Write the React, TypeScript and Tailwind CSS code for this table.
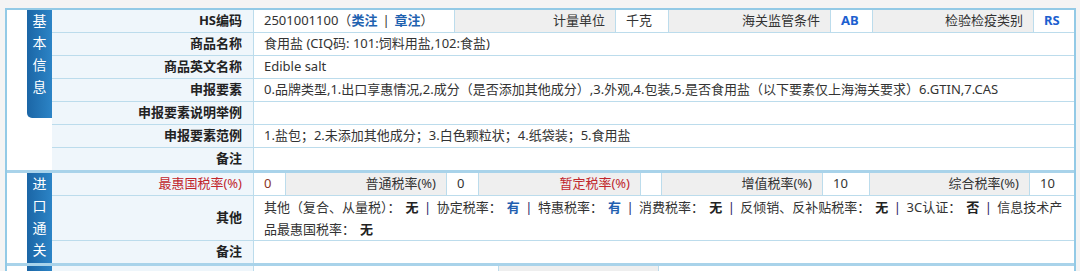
import React from "react";

const line = "border-[#bcdcec]";

function Label({ children, red }: { children?: React.ReactNode; red?: boolean }) {
  return (
    <div
      className={`flex w-[202px] shrink-0 items-center justify-end border-r ${line} bg-[#eff6fb] pr-[11px] ${
        red ? "text-[#c1272d]" : "font-bold text-[#222]"
      }`}
    >
      {children}
    </div>
  );
}

function Gray({ w, children, red }: { w: string; children?: React.ReactNode; red?: boolean }) {
  return (
    <div
      className={`flex ${w} shrink-0 items-center justify-end border-r ${line} bg-[#efefef] pr-[10px] ${
        red ? "text-[#c1272d]" : "text-[#333]"
      }`}
    >
      {children}
    </div>
  );
}

function Cell({ w, children, last }: { w?: string; children?: React.ReactNode; last?: boolean }) {
  return (
    <div
      className={`flex items-center px-[10px] ${w ? `${w} shrink-0` : "min-w-0 flex-1"} ${
        last ? "" : `border-r ${line}`
      }`}
    >
      {children}
    </div>
  );
}

function Row({ children, last, tall }: { children: React.ReactNode; last?: boolean; tall?: boolean }) {
  const h = tall ? (last ? "h-[44px]" : "h-[45px]") : last ? "h-[22px]" : "h-[23px]";
  return <div className={`flex ${h} ${last ? "" : `border-b ${line}`}`}>{children}</div>;
}

function Tab({ text, short }: { text: string; short?: boolean }) {
  return (
    <div
      className={`flex w-[25px] shrink-0 flex-col items-center bg-linear-to-r from-[#1b66a6] to-[#2c84c6] text-[14px] leading-[22px] text-white ${
        short ? "h-[108px] self-start rounded-bl-[5px]" : "self-stretch"
      }`}
    >
      {text.split("").map((c, i) => (
        <span key={i}>{c}</span>
      ))}
    </div>
  );
}

function Section({ tab, short, first, children }: { tab: string; short?: boolean; first?: boolean; children: React.ReactNode }) {
  return (
    <div className={`flex ${first ? "" : "border-t-[3px] border-[#a9d3ea]"}`}>
      <div className="w-[20px] shrink-0" />
      <Tab text={tab} short={short} />
      <div className="flex min-w-0 flex-1 flex-col">{children}</div>
    </div>
  );
}

const others: [string[], string][] = [
  [["其他（复合、从量税）："], "无"],
  [["协定税率："], "有"],
  [["特惠税率："], "有"],
  [["消费税率："], "无"],
  [["反倾销、反补贴税率："], "无"],
  [["3C认证："], "否"],
  [["信息技术产", "品最惠国税率："], "无"],
];

export default function App() {
  return (
    <div className="h-[271px] overflow-hidden bg-[#f4f4f4] pt-[8px] font-['Noto_Sans','Noto_Sans_CJK_SC',sans-serif] text-[13px] text-[#333]">
      <div className="ml-[5px] w-[1071px] border-x-2 border-t-2 border-[#93cae6] bg-white">
        <Section tab="基本信息" short first>
          <Row>
            <Label>HS编码</Label>
            <Cell w="w-[201px]">
              2501001100（<b className="text-[#1f62b0]">类注</b>
              <span className="mx-[5px]">|</span>
              <b className="text-[#1f62b0]">章注</b>）
            </Cell>
            <Gray w="w-[161px]">计量单位</Gray>
            <Cell w="w-[53px]">千克</Cell>
            <Gray w="w-[162px]">海关监管条件</Gray>
            <Cell w="w-[42px]">
              <b className="text-[#1d5fd0]">AB</b>
            </Cell>
            <Gray w="w-[161px]">检验检疫类别</Gray>
            <Cell last>
              <b className="text-[#1d5fd0]">RS</b>
            </Cell>
          </Row>
          <Row>
            <Label>商品名称</Label>
            <Cell last>食用盐 (CIQ码: 101:饲料用盐,102:食盐)</Cell>
          </Row>
          <Row>
            <Label>商品英文名称</Label>
            <Cell last>Edible salt</Cell>
          </Row>
          <Row>
            <Label>申报要素</Label>
            <Cell last>
              0.品牌类型,1.出口享惠情况,2.成分（是否添加其他成分）,3.外观,4.包装,5.是否食用盐（以下要素仅上海海关要求）6.GTIN,7.CAS
            </Cell>
          </Row>
          <Row>
            <Label>申报要素说明举例</Label>
            <Cell last />
          </Row>
          <Row>
            <Label>申报要素范例</Label>
            <Cell last>1.盐包；2.未添加其他成分；3.白色颗粒状；4.纸袋装；5.食用盐</Cell>
          </Row>
          <Row last>
            <Label>备注</Label>
            <Cell last />
          </Row>
        </Section>

        <Section tab="进口通关">
          <Row>
            <Label red>最惠国税率(%)</Label>
            <Cell w="w-[32px]">
              <span className="text-[#8a3324]">0</span>
            </Cell>
            <Gray w="w-[161px]">普通税率(%)</Gray>
            <Cell w="w-[32px]">0</Cell>
            <Gray w="w-[162px]" red>
              暂定税率(%)
            </Gray>
            <Cell w="w-[18px]" />
            <Gray w="w-[161px]">增值税率(%)</Gray>
            <Cell w="w-[47px]">10</Cell>
            <Gray w="w-[160px]">综合税率(%)</Gray>
            <Cell last>10</Cell>
          </Row>
          <Row tall>
            <Label>其他</Label>
            <div className="min-w-0 flex-1 pl-[10px] leading-[22px]">
              {others.map(([parts, v], i) => (
                <React.Fragment key={i}>
                  {parts.map((p) => (
                    <span key={p}>{p}</span>
                  ))}
                  <b className={`ml-[5px] ${v === "有" ? "text-[#1f5fb0]" : "text-[#222]"}`}>{v}</b>
                  {i < others.length - 1 && <span className="mx-[5.5px] text-[#1c2466]">|</span>}
                </React.Fragment>
              ))}
            </div>
          </Row>
          <Row last>
            <Label>备注</Label>
            <Cell last />
          </Row>
        </Section>

        <Section tab="">
          <Row>
            <Label />
            <Cell w="w-[245px]" />
            <Gray w="w-[160px]" />
            <Cell last />
          </Row>
        </Section>
      </div>
    </div>
  );
}
